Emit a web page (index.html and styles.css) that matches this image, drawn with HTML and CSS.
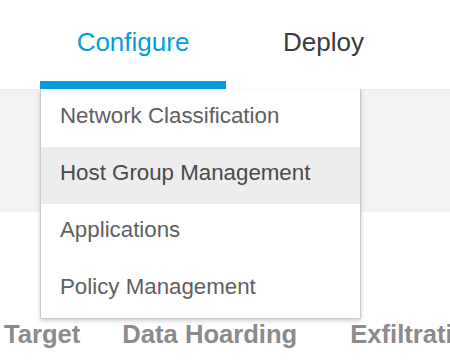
FILE: index.html
```html
<!DOCTYPE html>
<html>
<head>
<meta charset="utf-8">
<link rel="stylesheet" href="styles.css">
</head>
<body>
<div class="page">
  <header class="header">
    <nav class="tabs">
      <div class="tab tab-active">Configure</div>
      <div class="tab tab-deploy">Deploy</div>
    </nav>
  </header>
  <div class="band"></div>
  <div class="stages">
    <span class="stage stage-target">Target</span>
    <span class="stage stage-data">Data Hoarding</span>
    <span class="stage stage-exfil">Exfiltration</span>
  </div>
  <ul class="menu">
    <li class="menu-item">Network Classification</li>
    <li class="menu-item menu-item-hover">Host Group Management</li>
    <li class="menu-item">Applications</li>
    <li class="menu-item">Policy Management</li>
  </ul>
</div>
</body>
</html>
```
FILE: styles.css
```css
html, body {
  margin: 0;
  padding: 0;
  background: #ffffff;
}
.page {
  position: relative;
  width: 450px;
  height: 360px;
  overflow: hidden;
  font-family: "Liberation Sans", Arial, sans-serif;
}
.header {
  height: 89px;
  background: #ffffff;
}
.tabs {
  display: flex;
  height: 89px;
}
.tab {
  box-sizing: border-box;
  height: 89px;
  padding-top: 27px;
  font-size: 26px;
  line-height: 30px;
  color: #3a3a3c;
}
.tab-active {
  margin-left: 40px;
  width: 186px;
  text-align: center;
  color: #049fd9;
  border-bottom: 8px solid #049fd9;
}
.tab-deploy {
  margin-left: 57px;
}
.band {
  height: 123px;
  background: #f2f2f2;
  border-top: 1px solid #ebebeb;
  box-sizing: border-box;
}
.stages {
  display: flex;
  white-space: nowrap;
  margin-top: 107px;
  font-size: 25.6px;
  line-height: 30px;
  font-weight: bold;
  color: #8b8b8d;
}
.stage-target {
  margin-left: 4px;
}
.stage-data {
  margin-left: 42px;
}
.stage-exfil {
  margin-left: 53px;
}
.menu {
  position: absolute;
  top: 89px;
  left: 40px;
  width: 321px;
  box-sizing: border-box;
  margin: 0;
  padding: 0;
  list-style: none;
  background: #ffffff;
  border: 1px solid #c9c9c9;
  border-top: none;
  border-radius: 0 0 2px 2px;
  box-shadow: 0 2px 4px rgba(0, 0, 0, 0.18);
}
.menu-item {
  display: flex;
  align-items: center;
  box-sizing: border-box;
  height: 57px;
  padding: 0 0 5px 19px;
  font-size: 22.3px;
  color: #606062;
}
.menu-item:first-child {
  height: 58px;
}
.menu-item-hover {
  background: #ededed;
  color: #4a4a4c;
}
```
